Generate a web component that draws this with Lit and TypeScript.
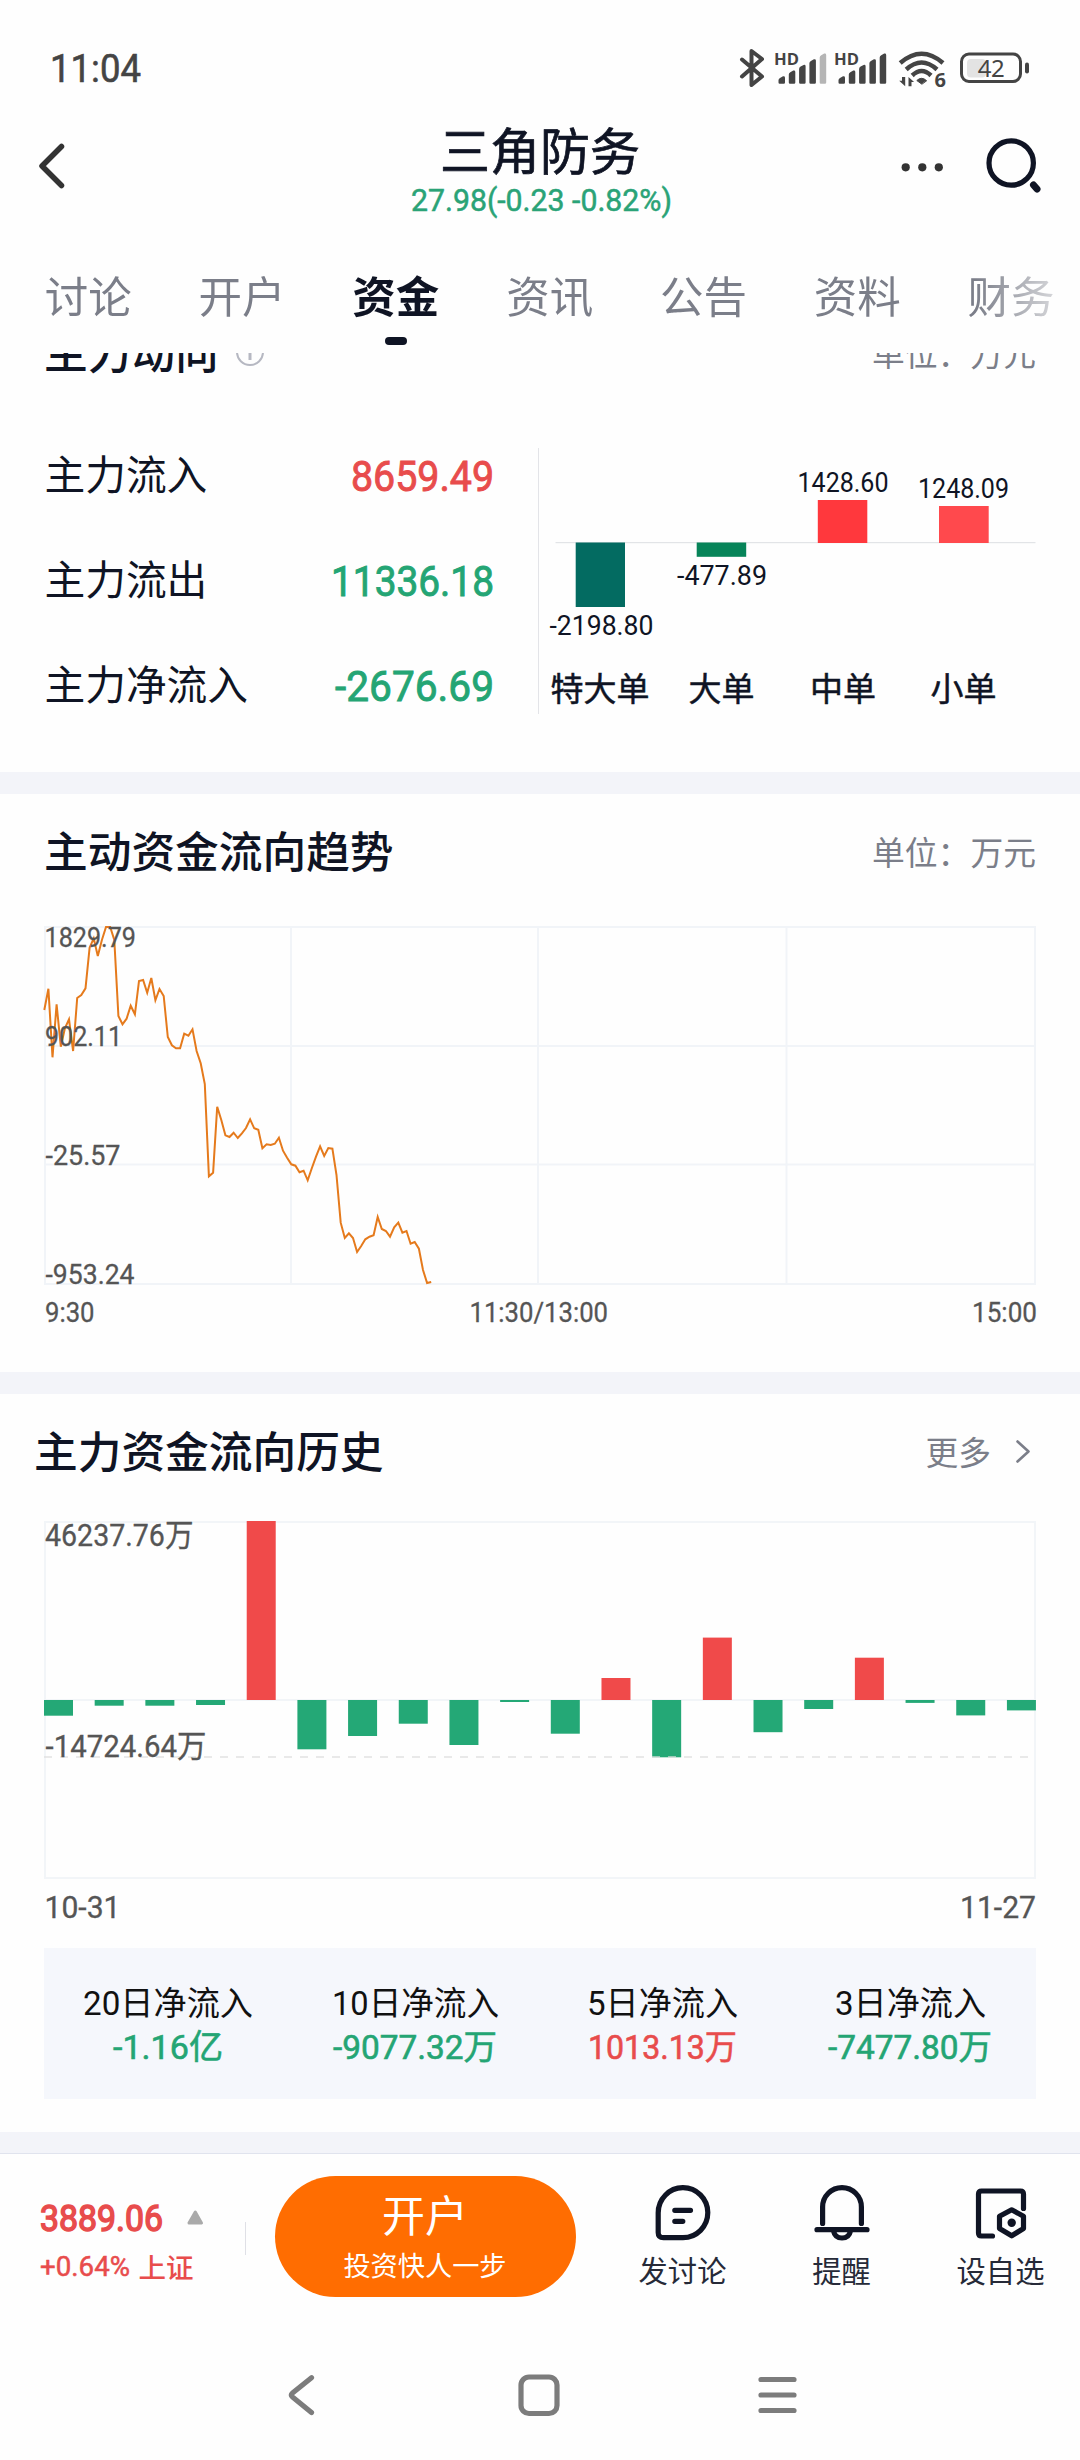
import { LitElement, html, svg, css } from "lit";
import { customElement, property } from "lit/decorators.js";

/** A single line of text set to an exact advance width. */
@customElement("fit-text")
export class FitText extends LitElement {
  @property() text = "";
  @property({ type: Number }) w = 100;
  @property({ type: Number }) size = 30;
  static styles = css`
    :host { display: block; flex: none; }
    svg { display: block; overflow: visible; }
    text { fill: currentColor; stroke: currentColor; stroke-width: var(--thicken, 0); font-family: Roboto, "Noto Sans CJK SC", sans-serif; }
  `;
  render() {
    return html`<svg width=${this.w} height=${this.size}>
      <text x="0" y=${this.size * 0.855} font-size=${this.size} textLength=${this.w} lengthAdjust="spacingAndGlyphs">${this.text}</text>
    </svg>`;
  }
}

const fit = (text: string, w: number, size: number, cls = "") =>
  html`<fit-text class=${cls} .text=${text} .w=${w} .size=${size}></fit-text>`;

const label = (text: string, x: number, y: number, w: number, size: number) =>
  svg`<text x=${x} y=${y} font-size=${size} textLength=${w} lengthAdjust="spacingAndGlyphs">${text}</text>`;

@customElement("status-bar")
export class StatusBar extends LitElement {
  static styles = css`
    :host { display: flex; justify-content: space-between; align-items: flex-start; height: 120px; padding: 48px 50px 0 50px; box-sizing: border-box; color: #444; }
    .time { --thicken: 0.6px; }
    svg { display: block; overflow: visible; }
    .hd { font: 700 15.5px "Open Sans", sans-serif; }
    .six { font: 700 20px "Open Sans", sans-serif; }
    .level { font: 400 24px "Noto Sans", sans-serif; }
  `;
  signal(x: number, faded: boolean) {
    return [0, 1, 2, 3, 4].map((i) => {
      const l = x + i * 10.3, t = 28.3 - i * 5.7;
      return svg`<path fill=${faded && i === 4 ? "#b5b5b5" : "#444"} d="M${l} ${t + 4} q0 -1.5 1.5 -2.3 l3 -1.7 q2 -.4 2 1.4 V34.5 q0 1.2 -1.2 1.2 h-4.1 q-1.2 0 -1.2 -1.2z"/>`;
    });
  }
  render() {
    return html`
      ${fit("11:04", 91, 39.5, "time")}
      <svg width="290" height="40" viewBox="0 0 290 40" fill="none" stroke="#444" stroke-width="4" stroke-linecap="round" stroke-linejoin="round">
        <path d="M2 11.5 L22 28.5 L11.5 37 V3 L22 11 L2 28.5"/>
        <g fill="#444" stroke="none">
          ${this.signal(38.5, true)} ${this.signal(98.5, false)}
          <text class="hd" x="34" y="16.500" textLength="25" lengthAdjust="spacingAndGlyphs">HD</text>
          <text class="hd" x="94" y="16.500" textLength="25" lengthAdjust="spacingAndGlyphs">HD</text>
          <path d="M181.6 36 L176.8 32.5 Q181.6 28 186.4 32.5z" stroke="#444" stroke-width="1"/>
          <path d="M162 29h3.2v9.2l-6-5.4h2.800zM168.500 38.200V29l5.600 5h-2.600v4.200z"/>
          <text class="six" x="194.500" y="39">6</text>
          <rect x="227" y="11" width="19" height="18.500" rx="4" fill="#e3e3e3"/>
          <rect x="285" y="14.500" width="4" height="11" rx="2"/>
          <text class="level" x="237.800" y="29.200" textLength="27">42</text>
        </g>
        <g stroke-width="4.500" stroke-linecap="butt">
          <path d="M160.200 15 Q181.600 -3.500 203 15"/>
          <path d="M166.200 21.500 Q181.600 7.500 197 21.500"/>
          <path d="M172.200 27.500 Q181.600 18.500 191 27.500"/>
        </g>
        <rect x="221.500" y="6" width="59" height="27.500" rx="7.500" stroke-width="3"/>
      </svg>`;
  }
}

@customElement("stock-header")
export class StockHeader extends LitElement {
  static styles = css`
    :host { display: grid; grid-template-columns: 200px 1fr 200px; height: 120px; color: #0f1424; }
    .icon { display: block; }
    .center { display: flex; flex-direction: column; align-items: center; }
    .name { font: 400 50px/56px "Noto Sans CJK SC", sans-serif; -webkit-text-stroke: 0.7px #0f1424; }
    .quote { color: #2aa377; margin: 9px 0 0 3px; --thicken: 0.5px; }
  `;
  render() {
    return html`
      <svg class="icon" width="200" height="100" fill="none" stroke="#333" stroke-width="5.500" stroke-linecap="round" stroke-linejoin="round"><path d="M61.500 26.500 L42 46 L61.500 65.500"/></svg>
      <div class="center"><div class="name">三角防务</div>${fit("27.98(-0.23 -0.82%)", 261, 30.5, "quote")}</div>
      <svg class="icon" width="200" height="100">
        <g fill="#333"><circle cx="25.700" cy="47.300" r="4.100"/><circle cx="42.300" cy="47.300" r="4.100"/><circle cx="58.800" cy="47.300" r="4.100"/></g>
        <circle cx="131.200" cy="43" r="22.200" fill="none" stroke="#0f1424" stroke-width="5.200"/>
        <path d="M153.500 65 L157 69" stroke="#0f1424" stroke-width="7" stroke-linecap="round"/>
      </svg>`;
  }
}

@customElement("tab-strip")
export class TabStrip extends LitElement {
  static styles = css`
    :host { display: flex; gap: 66.300px; height: 113px; padding: 25px 0 0 44.500px; box-sizing: border-box; overflow: hidden; font: 400 43.500px/60px "Noto Sans CJK SC", sans-serif; color: #7b7e89;
      -webkit-mask-image: linear-gradient(to right, #000 975px, transparent 1090px); mask-image: linear-gradient(to right, #000 975px, transparent 1090px); }
    .tab { flex: none; width: 87.500px; display: flex; flex-direction: column; align-items: center; }
    .on { color: #0f1424; font-weight: 700; }
    .on::after { content: ""; width: 22px; height: 8px; border-radius: 4px; background: #0f1424; margin-top: 12px; }
  `;
  render() {
    return ["讨论", "开户", "资金", "资讯", "公告", "资料", "财务"].map(
      (t) => html`<div class="tab ${t === "资金" ? "on" : ""}">${t}</div>`
    );
  }
}

const shared = css`
  .row { display: flex; justify-content: space-between; align-items: center; }
  .title { font: 500 43.700px/60px "Noto Sans CJK SC", sans-serif; color: #0f1424; }
  .unit { font: 400 32.800px/44px "Noto Sans CJK SC", sans-serif; color: #7b7e89; padding-top: 3px; }
  svg { display: block; overflow: visible; }
  svg text { font-family: Roboto, "Noto Sans CJK SC", sans-serif; }
`;

@customElement("main-flow")
export class MainFlow extends LitElement {
  static styles = [shared, css`
    :host { display: block; height: 419px; overflow: hidden; }
    .head { height: 60px; margin-top: -33px; padding: 0 44px 0 44px; }
    .left { display: flex; align-items: center; gap: 16px; }
    .body { display: flex; margin-top: 68px; height: 266px; }
    .list { width: 539px; padding: 0 45px 0 44.500px; box-sizing: border-box; height: 266px; margin-top: -28px; }
    .item { height: 105px; color: #0f1424; font: 400 40.700px/60px "Noto Sans CJK SC", sans-serif; }
    .up { color: #e84c4c; } .down { color: #24a574; }
    .num { --thicken: 0.9px; margin-top: 7px; }
    .chart { width: 500px; margin-left: -1px; border-left: 1.500px solid #e3e4e8; }
    .cat { font-weight: 400; font-size: 33px; stroke: #0f1424; stroke-width: 0.5px; }
  `];
  rows: [string, string, number, string][] = [
    ["主力流入", "8659.49", 143, "up"],
    ["主力流出", "11336.18", 163, "down"],
    ["主力净流入", "-2676.69", 159, "down"],
  ];
  render() {
    return html`
      <div class="row head">
        <div class="left"><div class="title">主力动向</div>
          <svg width="30" height="30" fill="none" stroke="#b6b8c2" stroke-width="2"><circle cx="15" cy="17" r="13"/><path d="M15 15V25" stroke-width="3"/><path d="M15 9V12" stroke-width="3"/></svg>
        </div>
        <div class="unit">单位：万元</div>
      </div>
      <div class="body">
        <div class="list">
          ${this.rows.map(([n, v, w, c]) => html`<div class="row item"><div>${n}</div>${fit(v, w, 42.2, "num " + c)}</div>`)}
        </div>
        <div class="chart">
          <svg width="500" height="266" viewBox="539.500 448 500 266" fill="#0f1424">
            <rect x="556" y="542" width="480" height="1.200" fill="#e2e4e7"/>
            <rect x="576.200" y="542.500" width="49.300" height="64.500" fill="#036b61"/>
            <rect x="697.200" y="542.500" width="49.500" height="14.300" fill="#078459"/>
            <rect x="818.300" y="500" width="49.500" height="43" fill="#ff383d"/>
            <rect x="939.500" y="506" width="49.700" height="37" fill="#ff494d"/>
            ${label("-2198.80", 550, 635.3, 104, 28.3)}
            ${label("-477.89", 677.5, 585.2, 90, 28.3)}
            ${label("1428.60", 798, 492.2, 91, 28.3)}
            ${label("1248.09", 918.5, 498.2, 91, 28.3)}
            <g text-anchor="middle">
              <text class="cat" x="600.500" y="700.500">特大单</text><text class="cat" x="722" y="700.500">大单</text>
              <text class="cat" x="843.500" y="700.500">中单</text><text class="cat" x="964" y="700.500">小单</text>
            </g>
          </svg>
        </div>
      </div>`;
  }
}

/** Vertical offsets of the intraday curve, one per minute from 9:30, in thirds of a pixel. */
const minutes = [
  330, 266, 472, 313, 440, 385, 358, 453, 294, 285, 265, 143, 115, 168, 120, 81, 81, 120, 348, 373, 356, 317, 343, 243,
  240, 278, 234, 301, 267, 288, 411, 436, 445, 445, 401, 407, 388, 453, 490, 552, 829, 818, 620, 660, 706, 711, 698, 714,
  700, 684, 658, 685, 689, 745, 733, 735, 731, 713, 752, 773, 793, 797, 817, 812, 841, 805, 770, 739, 768, 744, 746, 825,
  968, 1014, 1000, 1014, 1056, 1038, 1018, 1010, 1006, 951, 987, 993, 1010, 982, 968, 998, 993, 1031, 1026, 1046, 1110,
  1149, 1146,
];

@customElement("trend-chart")
export class TrendChart extends LitElement {
  static styles = [shared, css`
    :host { display: block; height: 578px; }
    .head { height: 60px; padding: 25px 44px 0 44px; }
    .plot { margin-top: 47px; }
  `];
  render() {
    const points = minutes.map((y, i) => `${(44.3 + i * 4.116).toFixed(1)},${(900 + y / 3).toFixed(1)}`).join(" ");
    return html`
      <div class="row head"><div class="title">主动资金流向趋势</div><div class="unit">单位：万元</div></div>
      <svg class="plot" width="1080" height="408" viewBox="0 926 1080 408">
        <g fill="none" stroke="#f1f4f8" stroke-width="2">
          <rect x="45" y="927" width="990" height="357"/>
          <path d="M45 1046H1035M45 1164.500H1035M291 927V1284M538 927V1284M786.500 927V1284"/>
        </g>
        <polyline points=${points} fill="none" stroke="#e57a1c" stroke-width="2"/>
        <g fill="#555" stroke="#555" stroke-width="0.300">
          ${label("1829.79", 44.5, 946.7, 91.500, 28)}
          ${label("902.11", 45, 1045.7, 77, 28)}
          ${label("-25.57", 45.500, 1165, 75, 28)}
          ${label("-953.24", 45.500, 1284, 89, 28)}
          ${label("9:30", 45, 1322, 49.500, 28)}
          ${label("11:30/13:00", 469.5, 1322, 138.500, 28)}
          ${label("15:00", 972, 1322, 65, 28)}
        </g>
      </svg>`;
  }
}

/** Signed bar heights of the daily history; positive is inflow. */
const days = [-15.7, -5.7, -5.7, -5, 179, -49.3, -36, -23.7, -45, -2, -33.7, 22, -57.3, 62.4, -32.2, -9, 42.3, -2.9, -15.4, -10.4];

@customElement("history-chart")
export class HistoryChart extends LitElement {
  static styles = [shared, css`
    :host { display: block; height: 738px; color: #111; }
    .head { height: 60px; padding: 25px 49px 0 34px; }
    .more { display: flex; align-items: center; gap: 24px; }
    .plot { margin-top: 42px; }
    .sums { display: grid; grid-template-columns: repeat(4, 1fr); margin: 0 44px; height: 151px; box-sizing: border-box; padding: 38px 2px 0 0; background: #f5f7fc; }
    .cell { display: flex; flex-direction: column; align-items: center; gap: 10px; }
    .up { color: #e84c4c; } .down { color: #24a574; }
    .sum { --thicken: 0.6px; }
  `];
  sums: [string, number, string, number, string][] = [
    ["20日净流入", 170, "-1.16亿", 110, "down"],
    ["10日净流入", 167, "-9077.32万", 164, "down"],
    ["5日净流入", 151, "1013.13万", 149, "up"],
    ["3日净流入", 151, "-7477.80万", 164, "down"],
  ];
  render() {
    return html`
      <div class="row head"><div class="title">主力资金流向历史</div>
        <div class="more unit"><span>更多</span><svg width="16" height="26" fill="none" stroke="#7b7e89" stroke-width="2.600" stroke-linecap="round" stroke-linejoin="round"><path d="M2.500 3.500 L13.500 13.500 L2.500 23.500"/></svg></div>
      </div>
      <svg class="plot" width="1080" height="427" viewBox="0 1521 1080 427">
        <g fill="none" stroke="#f2f5f8" stroke-width="2"><rect x="45" y="1522" width="990" height="356"/><path d="M45 1700H1035"/></g>
        ${days.map((h, i) => svg`<rect x=${44 + i * 50.68} y=${h > 0 ? 1700 - h : 1700} width="29" height=${Math.abs(h)} fill=${h > 0 ? "#f04a4a" : "#24a876"}/>`)}
        <path d="M44 1757H1034" stroke="#dddddd" stroke-opacity="0.650" stroke-width="2" stroke-dasharray="8 8"/>
        <g fill="#555" stroke="#555" stroke-width="0.300">
          ${label("46237.76万", 45, 1545.7, 148.500, 30.5)}
          ${label("-14724.64万", 45.500, 1756.7, 161, 30.5)}
          ${label("10-31", 44.500, 1918, 76, 30.5)}
          ${label("11-27", 960, 1918, 76, 30.5)}
        </g>
      </svg>
      <div class="sums">
        ${this.sums.map(([n, nw, v, vw, c]) => html`<div class="cell">${fit(n, nw, 33.500)}${fit(v, vw, 33.8, "sum " + c)}</div>`)}
      </div>`;
  }
}

@customElement("action-bar")
export class ActionBar extends LitElement {
  static styles = css`
    :host { display: flex; height: 166px; box-sizing: border-box; padding-top: 22px; }
    svg { display: block; overflow: visible; }
    .index { width: 206px; padding: 24px 0 0 39.500px; box-sizing: border-box; color: #e84c4c; }
    .line { display: flex; justify-content: space-between; align-items: flex-start; }
    .price { --thicken: 1.500px; }
    .delta { display: flex; align-items: center; gap: 9px; margin-top: 13px; }
    .pct { --thicken: 0.5px; }
    .mkt { font: 500 27.500px/30px "Noto Sans CJK SC", sans-serif; }
    .sep { width: 1.500px; height: 33px; background: #dfe0e6; margin: 46px 28.500px 0 41px; flex: none; }
    .open { width: 301px; height: 121px; border-radius: 61px; background: #ff6d01; color: #fff; flex: none; display: flex; flex-direction: column; align-items: center; font-family: "Noto Sans CJK SC", sans-serif; }
    .big { font-size: 43px; line-height: 56px; margin-top: 9px; }
    .small { font-size: 27.200px; line-height: 34px; margin-top: 6px; }
    .acts { display: flex; flex: 1; }
    .act { display: flex; flex-direction: column; align-items: center; font: 400 29.300px/40px "Noto Sans CJK SC", sans-serif; color: #262a38; gap: 8px; padding-top: 9px; box-sizing: border-box; width: 159px; }
    .act:first-child { margin-left: 27.500px; }
    .icon { fill: none; stroke: #0f1424; stroke-width: 5.200; stroke-linecap: round; stroke-linejoin: round; }
    .dot { fill: #0f1424; stroke: none; }
  `;
  render() {
    return html`
      <div class="index">
        <div class="line">${fit("3889.06", 123, 36.2, "price")}
          <svg width="18" height="38"><path d="M9.300 12 L15.500 23 H3z" fill="#aaa" stroke="#aaa" stroke-width="3" stroke-linejoin="round"/></svg></div>
        <div class="delta">${fit("+0.64%", 90, 27.8, "pct")}<span class="mkt">上证</span></div>
      </div>
      <div class="sep"></div>
      <div class="open"><div class="big">开户</div><div class="small">投资快人一步</div></div>
      <div class="acts">
        <div class="act"><svg class="icon" width="56" height="56"><path d="M28 52.700 H8.500 Q3.200 52.700 3.200 47.500 V28 A24.800 25 0 1 1 28 52.700z"/><path d="M19.800 25.300H35.500M19.800 36.300H27.800"/></svg><div>发讨论</div></div>
        <div class="act"><svg class="icon" width="56" height="56"><path d="M8.600 38.500 V22 A19.400 19.400 0 0 1 47.400 22 V38.500M3 44.700H53M19.500 46 Q21 53 28 53 Q35 53 36.500 46"/></svg><div>提醒</div></div>
        <div class="act"><svg class="icon" width="56" height="56"><path d="M50.500 23.500 V9 Q50.500 6 47.500 6 H8.500 Q5.500 6 5.500 9 V48 Q5.500 51 8.500 51 H19.500"/><path d="M38.700 24.800 L50.500 31.200 V43.500 L38.700 50.800 L26.500 43.500 V31.200z"/><circle class="dot" cx="38.700" cy="37.800" r="4.200"/></svg><div>设自选</div></div>
      </div>`;
  }
}

@customElement("app-root")
export class AppRoot extends LitElement {
  static styles = css`
    :host { display: block; width: 1080px; height: 2460px; overflow: hidden; background: #fefefe; }
    .band { height: 22px; background: #f3f4f9; }
    .edge { height: 21px; border-bottom: 1px solid #e0e3ee; }
    .nav { display: flex; justify-content: center; gap: 195px; padding: 53px 2px 0 0; }
    .nav svg { display: block; flex: none; width: 44px; height: 44px; overflow: visible; fill: none; stroke: #7c7c7c; stroke-width: 5.200; stroke-linecap: round; stroke-linejoin: round; }
  `;
  render() {
    return html`
      <status-bar></status-bar>
      <stock-header></stock-header>
      <tab-strip></tab-strip>
      <main-flow></main-flow>
      <div class="band"></div>
      <trend-chart></trend-chart>
      <div class="band"></div>
      <history-chart></history-chart>
      <div class="band edge"></div>
      <action-bar></action-bar>
      <div class="nav">
        <svg><path d="M33.500 4.700 L14.500 20 Q12 22 14.500 24 L33.500 39.500"/></svg>
        <svg><rect x="4" y="4" width="36" height="36.500" rx="8"/></svg>
        <svg><path d="M5 6.500H38M5 22H38M5 37.500H38"/></svg>
      </div>`;
  }
}
